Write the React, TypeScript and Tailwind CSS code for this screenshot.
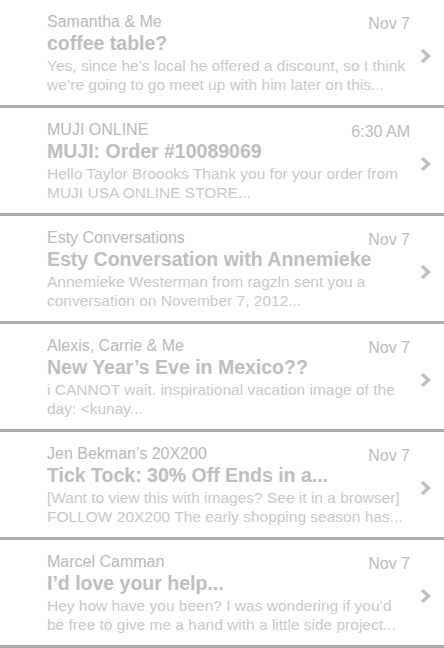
const messages = [
  {
    from: 'Samantha & Me',
    date: 'Nov 7',
    subject: 'coffee table?',
    preview: 'Yes, since he’s local he offered a discount, so I think we’re going to go meet up with him later on this...',
  },
  {
    from: 'MUJI ONLINE',
    date: '6:30 AM',
    subject: 'MUJI: Order #10089069',
    preview: 'Hello Taylor Broooks Thank you for your order from MUJI USA ONLINE STORE...',
  },
  {
    from: 'Esty Conversations',
    date: 'Nov 7',
    subject: 'Esty Conversation with Annemieke',
    preview: 'Annemieke Westerman from ragzln sent you a conversation on November 7, 2012...',
  },
  {
    from: 'Alexis, Carrie & Me',
    date: 'Nov 7',
    subject: 'New Year’s Eve in Mexico??',
    preview: 'i CANNOT wait. inspirational vacation image of the day: <kunay...',
  },
  {
    from: 'Jen Bekman’s 20X200',
    date: 'Nov 7',
    subject: 'Tick Tock: 30% Off Ends in a...',
    preview: '[Want to view this with images? See it in a browser] FOLLOW 20X200 The early shopping season has...',
  },
  {
    from: 'Marcel Camman',
    date: 'Nov 7',
    subject: 'I’d love your help...',
    preview: 'Hey how have you been? I was wondering if you’d be free to give me a hand with a little side project...',
  },
]

function Chevron() {
  return (
    <svg width="13" height="16" viewBox="0 0 13 16" className="shrink-0">
      <polyline points="3,2 9.5,8 3,14" fill="none" stroke="#c0c0c0" strokeWidth="3.4" />
    </svg>
  )
}

export default function App() {
  return (
    <div
      className="w-[444px] h-[648px] overflow-hidden bg-white"
      style={{ fontFamily: '"Liberation Sans", Arial, sans-serif' }}
    >
      {messages.map((m) => (
        <div key={m.subject} className="flex h-[108px] items-center border-b-[3px] border-[#ababab] pl-[47px] pr-[10px]">
          <div className="flex w-[364px] flex-col pt-[1px]">
            <div className="flex items-end justify-between">
              <span className="text-[16px] leading-[20px] text-[#b9b9b9]">{m.from}</span>
              <span className="relative top-[2px] mr-[1px] text-[16px] leading-[20px] text-[#bcbcbc]">{m.date}</span>
            </div>
            <div className="truncate text-[19.5px] font-bold leading-[23px] text-[#bebebe]">{m.subject}</div>
            <div className="mt-[1px] text-[15.5px] leading-[19px] text-[#c9c9c9]">{m.preview}</div>
          </div>
          <div className="ml-[8px] flex items-center pt-[6px]">
            <Chevron />
          </div>
        </div>
      ))}
    </div>
  )
}
